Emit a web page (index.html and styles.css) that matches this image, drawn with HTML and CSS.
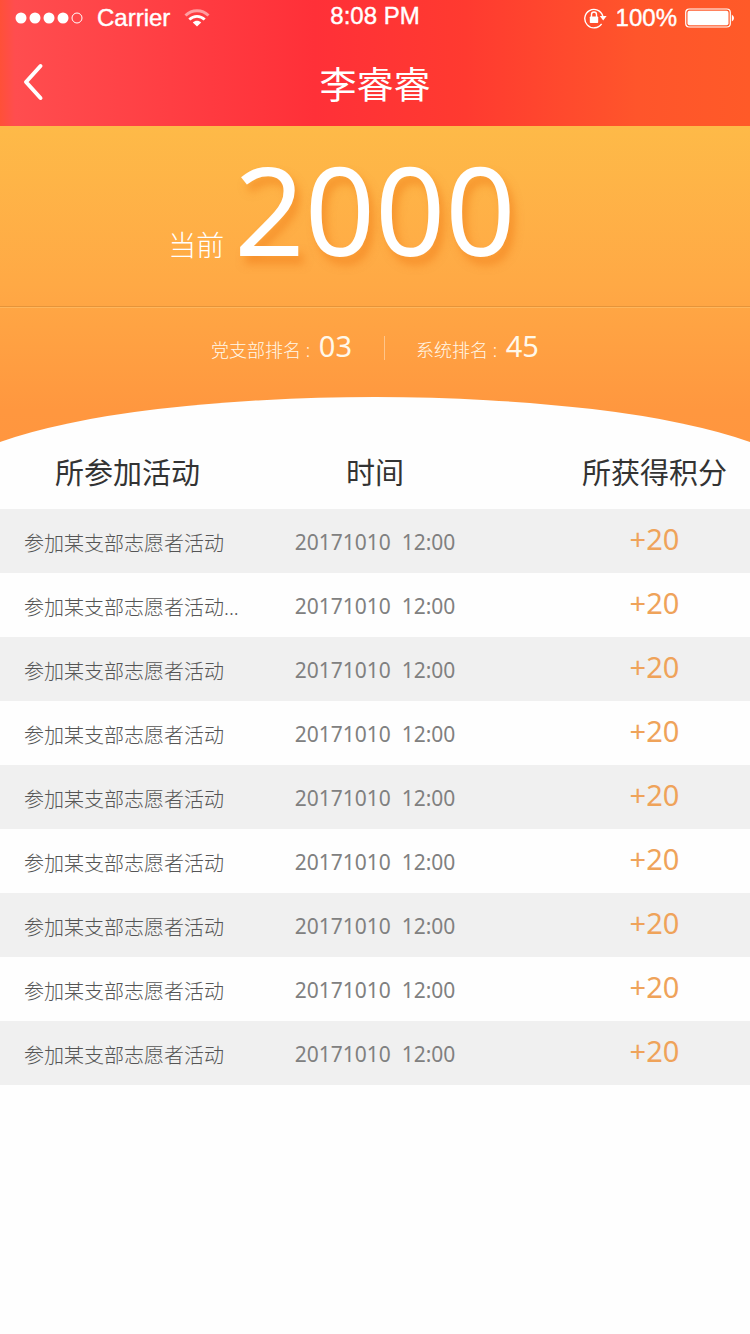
FILE: index.html
```html
<!DOCTYPE html>
<html lang="zh-CN">
<head>
    <meta charset="UTF-8">
    <meta name="viewport" content="width=device-width, initial-scale=1.0">
    <title>李睿睿</title>
    <link rel="stylesheet" href="styles.css">
</head>
<body>

<header class="header">
    <!-- 状态栏 -->
    <div class="status-bar">
        <div class="status-left">
            <svg class="signal" width="68" height="12" viewBox="0 0 68 12">
                <circle cx="6" cy="6" r="5.5" fill="#fff"/>
                <circle cx="20" cy="6" r="5.5" fill="#fff"/>
                <circle cx="34" cy="6" r="5.5" fill="#fff"/>
                <circle cx="48" cy="6" r="5.5" fill="#fff"/>
                <circle cx="62" cy="6" r="5" fill="none" stroke="#fff"/>
            </svg>
            <span>Carrier</span>
            <svg class="wifi" width="26" height="18" viewBox="0 0 26 18">
                <path d="M1.5 6.5C8 .2 18 .2 24.5 6.5" fill="none" stroke="#fff" stroke-width="3" opacity=".5"/>
                <path d="M5.3 10.5C9.8 6.2 16.2 6.2 20.7 10.5" fill="none" stroke="#fff" stroke-width="2.8"/>
                <path d="M13 17.5L8.8 13.5C11.2 11.3 14.8 11.3 17.2 13.5Z" fill="#fff"/>
            </svg>
        </div>
        <span class="status-time">8:08 PM</span>
        <div class="status-right">
            <svg class="lock" width="24" height="22" viewBox="0 0 24 22">
                <path d="M17.6 16.8A9.2 9.2 0 1 1 18.8 9" fill="none" stroke="#fff" stroke-width="1.4"/>
                <path d="M15.8 9H22.6L19.2 13.4Z" fill="#fff"/>
                <rect x="5.8" y="9.5" width="8.4" height="6.5" rx=".8" fill="#fff"/>
                <path d="M7.5 10V7.5A2.5 2.5 0 0 1 12.5 7.5V10" fill="none" stroke="#fff" stroke-width="1.4"/>
            </svg>
            <span>100%</span>
            <svg class="battery" width="50" height="20" viewBox="0 0 50 20">
                <rect x=".7" y="1" width="44.6" height="18" rx="3.5" fill="none" stroke="#fff" stroke-width="1.2"/>
                <rect x="2.5" y="2.8" width="41" height="14.4" rx="2" fill="#fff"/>
                <path d="M46.8 6.5Q49 8 49 10T46.8 13.5Z" fill="#fff"/>
            </svg>
        </div>
    </div>

    <!-- 导航栏 -->
    <div class="nav-bar">
        <button class="back-button" type="button" aria-label="返回">
            <svg width="22" height="40" viewBox="0 0 22 40">
                <path d="M17.5 4L3 20L17.5 36" fill="none" stroke="#fff" stroke-width="4" stroke-linecap="round" stroke-linejoin="round"/>
            </svg>
        </button>
        <h1>李睿睿</h1>
    </div>
</header>

<!-- 当前积分 -->
<section class="score">
    <div class="score-current">
        <span class="score-label">当前</span>
        <strong class="score-value">2000</strong>
    </div>
    <div class="rank">
        <div class="rank-item">党支部排名 : <span class="rank-value">03</span></div>
        <div class="rank-item">系统排名 : <span class="rank-value">45</span></div>
    </div>
    <svg class="curve" viewBox="0 0 750 46" preserveAspectRatio="none">
        <path d="M0 46A430 88 0 0 1 750 46Z" fill="#fefefe"/>
    </svg>
</section>

<!-- 活动列表 -->
<table class="activity">
    <thead>
        <tr>
            <th class="col-name">所参加活动</th>
            <th class="col-time">时间</th>
            <th class="col-point">所获得积分</th>
        </tr>
    </thead>
    <tbody>
        <tr>
            <td class="col-name">参加某支部志愿者活动</td>
            <td class="col-time">20171010  12:00</td>
            <td class="col-point">+20</td>
        </tr>
        <tr>
            <td class="col-name">参加某支部志愿者活动...</td>
            <td class="col-time">20171010  12:00</td>
            <td class="col-point">+20</td>
        </tr>
        <tr>
            <td class="col-name">参加某支部志愿者活动</td>
            <td class="col-time">20171010  12:00</td>
            <td class="col-point">+20</td>
        </tr>
        <tr>
            <td class="col-name">参加某支部志愿者活动</td>
            <td class="col-time">20171010  12:00</td>
            <td class="col-point">+20</td>
        </tr>
        <tr>
            <td class="col-name">参加某支部志愿者活动</td>
            <td class="col-time">20171010  12:00</td>
            <td class="col-point">+20</td>
        </tr>
        <tr>
            <td class="col-name">参加某支部志愿者活动</td>
            <td class="col-time">20171010  12:00</td>
            <td class="col-point">+20</td>
        </tr>
        <tr>
            <td class="col-name">参加某支部志愿者活动</td>
            <td class="col-time">20171010  12:00</td>
            <td class="col-point">+20</td>
        </tr>
        <tr>
            <td class="col-name">参加某支部志愿者活动</td>
            <td class="col-time">20171010  12:00</td>
            <td class="col-point">+20</td>
        </tr>
        <tr>
            <td class="col-name">参加某支部志愿者活动</td>
            <td class="col-time">20171010  12:00</td>
            <td class="col-point">+20</td>
        </tr>
    </tbody>
</table>

</body>
</html>
```
FILE: styles.css
```css
* {
    box-sizing: border-box;
}

body {
    margin: 0;
    font-family: "Noto Sans", "Noto Sans CJK SC", sans-serif;
    background-color: #fefefe;
    color: #333;
}

svg {
    display: block;
    flex-shrink: 0;
}

.header {
    background: linear-gradient(90deg, #ff5038 0, #ff4d4f 2%, #ff3038 42%, #ff3a30 62%, #ff552b 85%, #ff5a28 100%);
    color: #fff;
}

/* 状态栏 */
.status-bar {
    display: grid;
    grid-template-columns: 1fr auto 1fr;
    align-items: center;
    height: 36px;
    padding: 0 15px;
    font-family: "Liberation Sans", Arial, sans-serif;
    font-size: 24px;
    line-height: 32px;
    -webkit-text-stroke: 0.4px #fff;
}

.status-left,
.status-right {
    display: flex;
    align-items: center;
}

.status-left {
    gap: 14px;
}

.status-time {
    padding-bottom: 4px;
}

.status-right {
    justify-content: flex-end;
    gap: 8px;
}

/* 导航栏 */
.nav-bar {
    display: grid;
    grid-template-columns: 60px 1fr 60px;
    align-items: center;
    height: 90px;
    padding-top: 4px;
}

.nav-bar h1 {
    margin: 0;
    padding-top: 4px;
    font-size: 37px;
    font-weight: 400;
    line-height: 48px;
    text-align: center;
}

.back-button {
    display: flex;
    padding: 0 0 2px 23px;
    border: none;
    background: none;
    cursor: pointer;
}

/* 积分区域 */
.score {
    background: linear-gradient(180deg, #feba48 0, #ffa945 50%, #ff973f 90%, #ff963f 100%);
    color: #fff;
}

.score-current {
    display: flex;
    justify-content: center;
    align-items: baseline;
    gap: 10px;
    height: 181px;
    padding-right: 66px;
    border-bottom: 1px solid #e5943a;
    line-height: 166px;
}

.score-label {
    font-size: 28px;
    font-weight: 300;
}

.score-value {
    font-size: 123px;
    font-weight: 400;
    text-shadow: 5px 8px 8px rgba(240, 120, 20, 0.5);
}

.rank {
    display: flex;
    justify-content: center;
    align-items: flex-start;
    height: 89px;
    padding-top: 18px;
    border-top: 1px solid #ffb65c;
    line-height: 40px;
}

.rank-item {
    font-size: 18px;
    font-weight: 300;
    color: #fff8ea;
}

.rank-item + .rank-item {
    margin-left: 32px;
    padding-left: 32px;
    background: linear-gradient(#ffc589, #ffc589) left 50% / 1px 24px no-repeat;
}

.rank-value {
    margin-left: 4px;
    font-size: 29px;
    font-weight: 400;
}

.curve {
    width: 100%;
    height: 46px;
}

/* 活动列表 */
.activity {
    width: 100%;
    border-collapse: collapse;
    table-layout: fixed;
}

.activity th {
    height: 67px;
    padding: 0 0 6px;
    font-size: 29px;
    font-weight: 400;
    line-height: 40px;
    text-align: center;
}

.activity td {
    height: 64px;
    padding: 2px 0 0;
    font-size: 20px;
    line-height: 32px;
    color: #777;
}

.activity tbody tr:nth-child(odd) {
    background-color: #f0f0f0;
}

.activity .col-name {
    width: 34%;
}

.activity td.col-name {
    padding-top: 6px;
    padding-left: 24px;
    font-weight: 300;
    color: #555;
    white-space: nowrap;
}

.activity .col-time {
    width: 32%;
    text-align: center;
    white-space: pre;
}

.activity td.col-time {
    font-size: 21px;
    color: #808080;
}

.activity .col-point {
    width: 34%;
    padding-left: 64px;
    text-align: center;
}

.activity td.col-point {
    padding-top: 0;
    padding-bottom: 4px;
    font-size: 29px;
    color: #efa35a;
}
```
